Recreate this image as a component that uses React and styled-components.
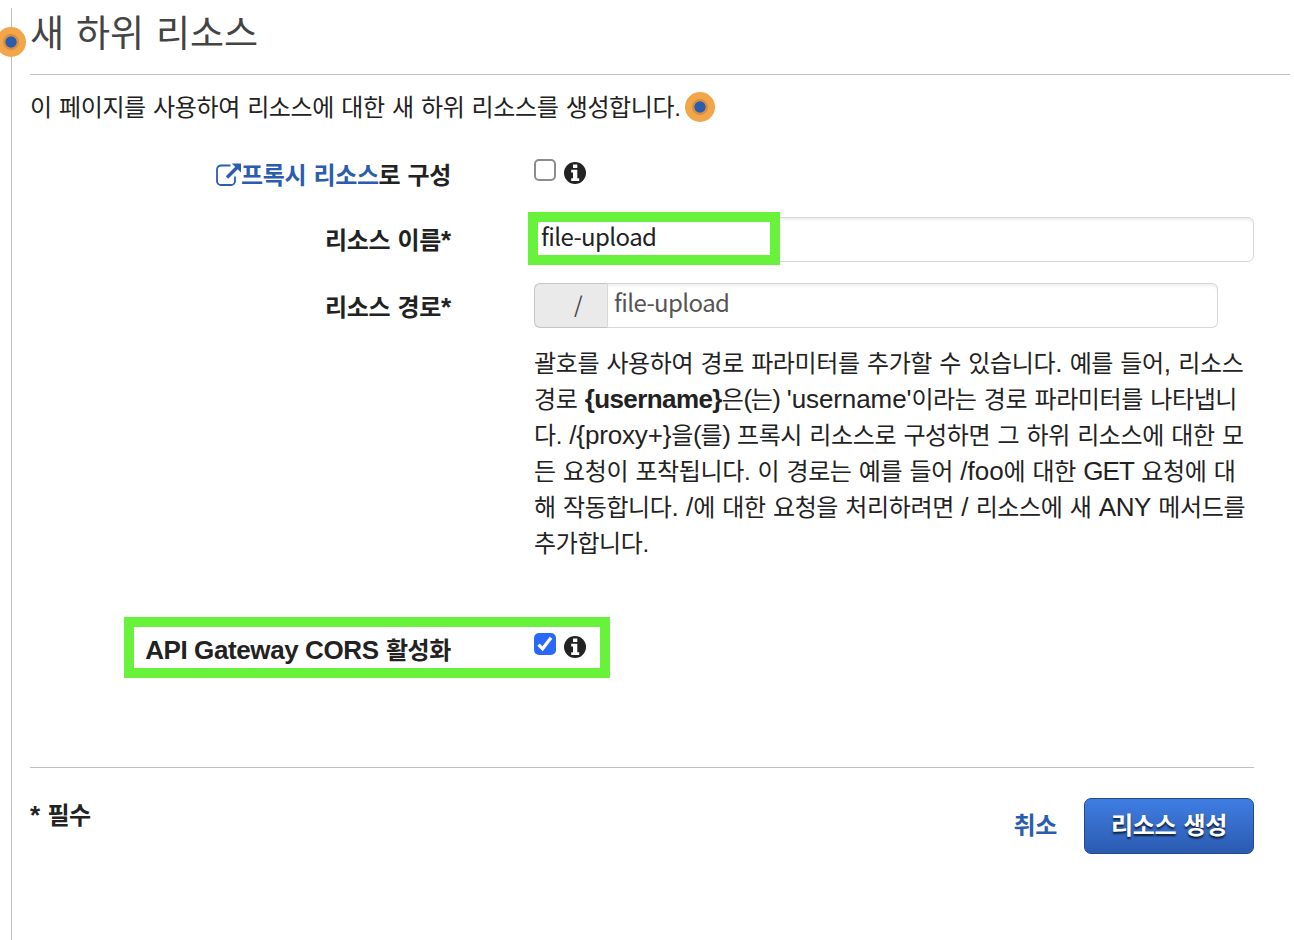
import React from "react";
import styled, { createGlobalStyle } from "styled-components";

const GlobalStyle = createGlobalStyle`
  * {
    box-sizing: border-box;
  }
  body {
    margin: 0;
    background: #fff;
    color: #222;
    font-family: "Liberation Sans", "Noto Sans CJK KR", sans-serif;
    font-size: 24px;
    line-height: 36px;
    letter-spacing: -0.38px;
    word-spacing: 1px;
  }
`;

const Page = styled.div`
  display: flex;
  height: 940px;
  padding: 8px 4px 0 11px;
  overflow: hidden;
`;

const Divider = styled.div`
  position: relative;
  flex: none;
  width: 1px;
  background: #bfbfbf;
`;

const Main = styled.main`
  flex: 1;
  margin-left: 18px;
`;

const Title = styled.h1`
  height: 67px;
  margin: 0;
  padding-top: 2px;
  border-bottom: 1px solid #bfbfbf;
  color: #444;
  font-size: 37px;
  font-weight: 400;
  line-height: 50px;
  letter-spacing: 0;
  word-spacing: 1.6px;
`;

const Intro = styled.div`
  display: flex;
  align-items: center;
  height: 63px;
  margin-bottom: 1px;
  gap: 4px;
  white-space: nowrap;
`;

const IntroText = styled.span`
  padding-top: 3px;
`;

const Dot = styled.span`
  flex: none;
  width: 30px;
  height: 30px;
  border-radius: 50%;
  background: radial-gradient(
    circle,
    #2a5db0 0 5.2px,
    #d68f41 6px 7.5px,
    #f2a549 8.5px
  );
`;

const DividerDot = styled(Dot)`
  position: absolute;
  left: -15px;
  top: 19px;
`;

const Form = styled.div`
  width: 1224px;
  height: 629px;
  border-bottom: 1px solid #bfbfbf;
`;

const Row = styled.div`
  position: relative;
  display: grid;
  grid-template-columns: 421px 720px;
  column-gap: 83px;
  height: ${(p) => p.$height}px;
  align-items: start;
`;

const Label = styled.label`
  padding-top: ${(p) => p.$top || 0}px;
  font-weight: 700;
  text-align: right;
  white-space: nowrap;
`;

const Link = styled.a`
  color: #2a5db0;
  text-decoration: none;
  font-weight: 700;
`;

const ExternalSvg = styled.svg`
  width: 25px;
  height: 23px;
  vertical-align: -2px;
`;

const Checks = styled.div`
  display: flex;
  align-items: flex-start;
  gap: 8px;
  padding-top: ${(p) => p.$top}px;

  svg {
    display: block;
  }
`;

const Box = styled.span`
  width: 22px;
  height: 22px;
  border: 2px solid ${(p) => (p.$checked ? "#2b68f8" : "#8c8c8c")};
  border-radius: 5px;
  background: ${(p) => (p.$checked ? "#2b68f8" : "#fff")};
`;

const InfoSvg = styled.svg`
  width: 22px;
  height: 22px;
  margin-top: 3px;
`;

const Input = styled.div`
  width: 720px;
  height: 45px;
  padding: 0 6px;
  border: 1px solid #d8d8d8;
  border-radius: 6px;
  box-shadow: inset 0 3px 3px -1px #eee;
  font-family: "Noto Sans CJK KR", sans-serif;
  font-size: 24px;
  line-height: 36px;
  letter-spacing: -0.6px;
`;

const Group = styled.div`
  display: flex;
  width: 684px;
`;

const Addon = styled.span`
  width: 74px;
  height: 45px;
  padding: 1px 0 0 14px;
  border: 1px solid #c4c4c4;
  border-right-color: #d8d8d8;
  border-radius: 6px 0 0 6px;
  background: #eaeaea;
  color: #444;
  font-family: "Noto Sans CJK KR", sans-serif;
  font-size: 22px;
  text-align: center;
`;

const PathInput = styled(Input)`
  width: 610px;
  border-left: 0;
  border-radius: 0 6px 6px 0;
  color: #555;
`;

const Help = styled.p`
  margin: 0;
  padding-top: 1px;
  grid-column: 2;
`;

const Line = styled.span`
  display: block;
  height: 36px;
  white-space: nowrap;
`;

const Latin = styled.span`
  font-size: 26px;
  line-height: 1;
  letter-spacing: ${(p) => p.$spacing || 0}px;
  word-spacing: 0;
`;

const Highlight = styled.div`
  position: absolute;
  left: ${(p) => p.$left}px;
  top: ${(p) => p.$top}px;
  width: ${(p) => p.$width}px;
  height: ${(p) => p.$height}px;
  border: 10px solid #69f23b;
  pointer-events: none;
`;

const Footer = styled.footer`
  display: flex;
  width: 1224px;
  padding-top: 30px;
  font-weight: 700;
`;

const Required = styled.span`
  flex: 1;
`;

const Cancel = styled(Link)`
  padding-top: 10px;
  margin-right: 27px;
`;

const Submit = styled.button`
  width: 170px;
  height: 56px;
  padding: 0;
  border: 1px solid #23498a;
  border-radius: 7px;
  background: linear-gradient(#3f7de3, #2b5bb0);
  color: #fff;
  font: inherit;
  letter-spacing: inherit;
  word-spacing: inherit;
  text-shadow: 0 2px 2px rgba(0, 0, 0, 0.75);
`;

const ExternalIcon = () => (
  <ExternalSvg viewBox="0 0 25 23" fill="none">
    <path
      d="M14.5 2.5H5a4 4 0 0 0-4 4V18a4 4 0 0 0 4 4h10a4 4 0 0 0 4-4v-4.5"
      stroke="#2a5db0"
      strokeWidth="1.8"
    />
    <path d="M11 14.5L21 4.5" stroke="#2a5db0" strokeWidth="3.4" />
    <path d="M15.8 0.5H25V9.5z" fill="#2a5db0" />
  </ExternalSvg>
);

const Info = () => (
  <InfoSvg viewBox="0 0 22 22">
    <circle cx="11" cy="11" r="11" fill="#222" />
    <path
      d="M9 2.6h4.3v3.3H9zM7.2 7.7h6.1v8.5h1.9v2.7H7.2v-2.7H9v-5.7H7.2z"
      fill="#fff"
    />
  </InfoSvg>
);

const Checkbox = ({ checked }) => (
  <Box $checked={checked}>
    {checked && (
      <svg width="18" height="18" viewBox="0 0 18 18" fill="none">
        <path d="M2.6 9.6l4 4.2L15 2.8" stroke="#fff" strokeWidth="3.2" />
      </svg>
    )}
  </Box>
);

const App = () => {
  return (
    <>
      <GlobalStyle />
      <Page>
        <Divider>
          <DividerDot />
        </Divider>
        <Main>
          <Title>새 하위 리소스</Title>
          <Intro>
            <IntroText>
              이 페이지를 사용하여 리소스에 대한 새 하위 리소스를 생성합니다.
            </IntroText>
            <Dot />
          </Intro>
          <Form>
            <Row $height={78}>
              <Label $top={19}>
                <Link>
                  <ExternalIcon />
                  프록시 리소스
                </Link>
                로 구성
              </Label>
              <Checks $top={20}>
                <Checkbox />
                <Info />
              </Checks>
            </Row>
            <Row $height={66}>
              <Label $top={6}>
                리소스 이름<Latin>*</Latin>
              </Label>
              <Input>file-upload</Input>
              <Highlight $left={498} $top={-5} $width={252} $height={53} />
            </Row>
            <Row $height={62}>
              <Label $top={7}>
                리소스 경로<Latin>*</Latin>
              </Label>
              <Group>
                <Addon>/</Addon>
                <PathInput>file-upload</PathInput>
              </Group>
            </Row>
            <Row $height={272}>
              <Help>
                <Line>
                  괄호를 사용하여 경로 파라미터를 추가할 수 있습니다
                  <Latin>.</Latin> 예를 들어<Latin>,</Latin> 리소스
                </Line>
                <Line>
                  경로{" "}
                  <Latin as="b" $spacing={-0.6}>
                    {"{username}"}
                  </Latin>
                  은<Latin $spacing={-1.5}>(</Latin>는
                  <Latin $spacing={-1.5}>)</Latin>{" "}
                  <Latin $spacing={-0.1}>'username'</Latin>이라는 경로
                  파라미터를 나타냅니
                </Line>
                <Line>
                  다. <Latin $spacing={-0.15}>{"/{proxy+}"}</Latin>을
                  <Latin $spacing={-1.2}>(</Latin>를
                  <Latin $spacing={-1.2}>)</Latin> 프록시 리소스로 구성하면 그
                  하위 리소스에 대한 모
                </Line>
                <Line>
                  든 요청이 포착됩니다. 이 경로는 예를 들어{" "}
                  <Latin>/foo</Latin>에 대한{" "}
                  <Latin $spacing={-0.9}>GET</Latin> 요청에 대
                </Line>
                <Line>
                  해 작동합니다<Latin>.</Latin> <Latin>/</Latin>에 대한 요청을
                  처리하려면 <Latin>/</Latin> 리소스에 새{" "}
                  <Latin $spacing={-0.4}>ANY</Latin> 메서드를
                </Line>
                <Line>추가합니다.</Line>
              </Help>
            </Row>
            <Row $height={80}>
              <Label $top={16}>
                <Latin $spacing={-0.4}>API Gateway CORS</Latin> 활성화
              </Label>
              <Checks $top={16}>
                <Checkbox checked />
                <Info />
              </Checks>
              <Highlight $left={94} $top={0} $width={486} $height={61} />
            </Row>
          </Form>
          <Footer>
            <Required>
              <Latin>*</Latin> 필수
            </Required>
            <Cancel>취소</Cancel>
            <Submit>리소스 생성</Submit>
          </Footer>
        </Main>
      </Page>
    </>
  );
};

export default App;
